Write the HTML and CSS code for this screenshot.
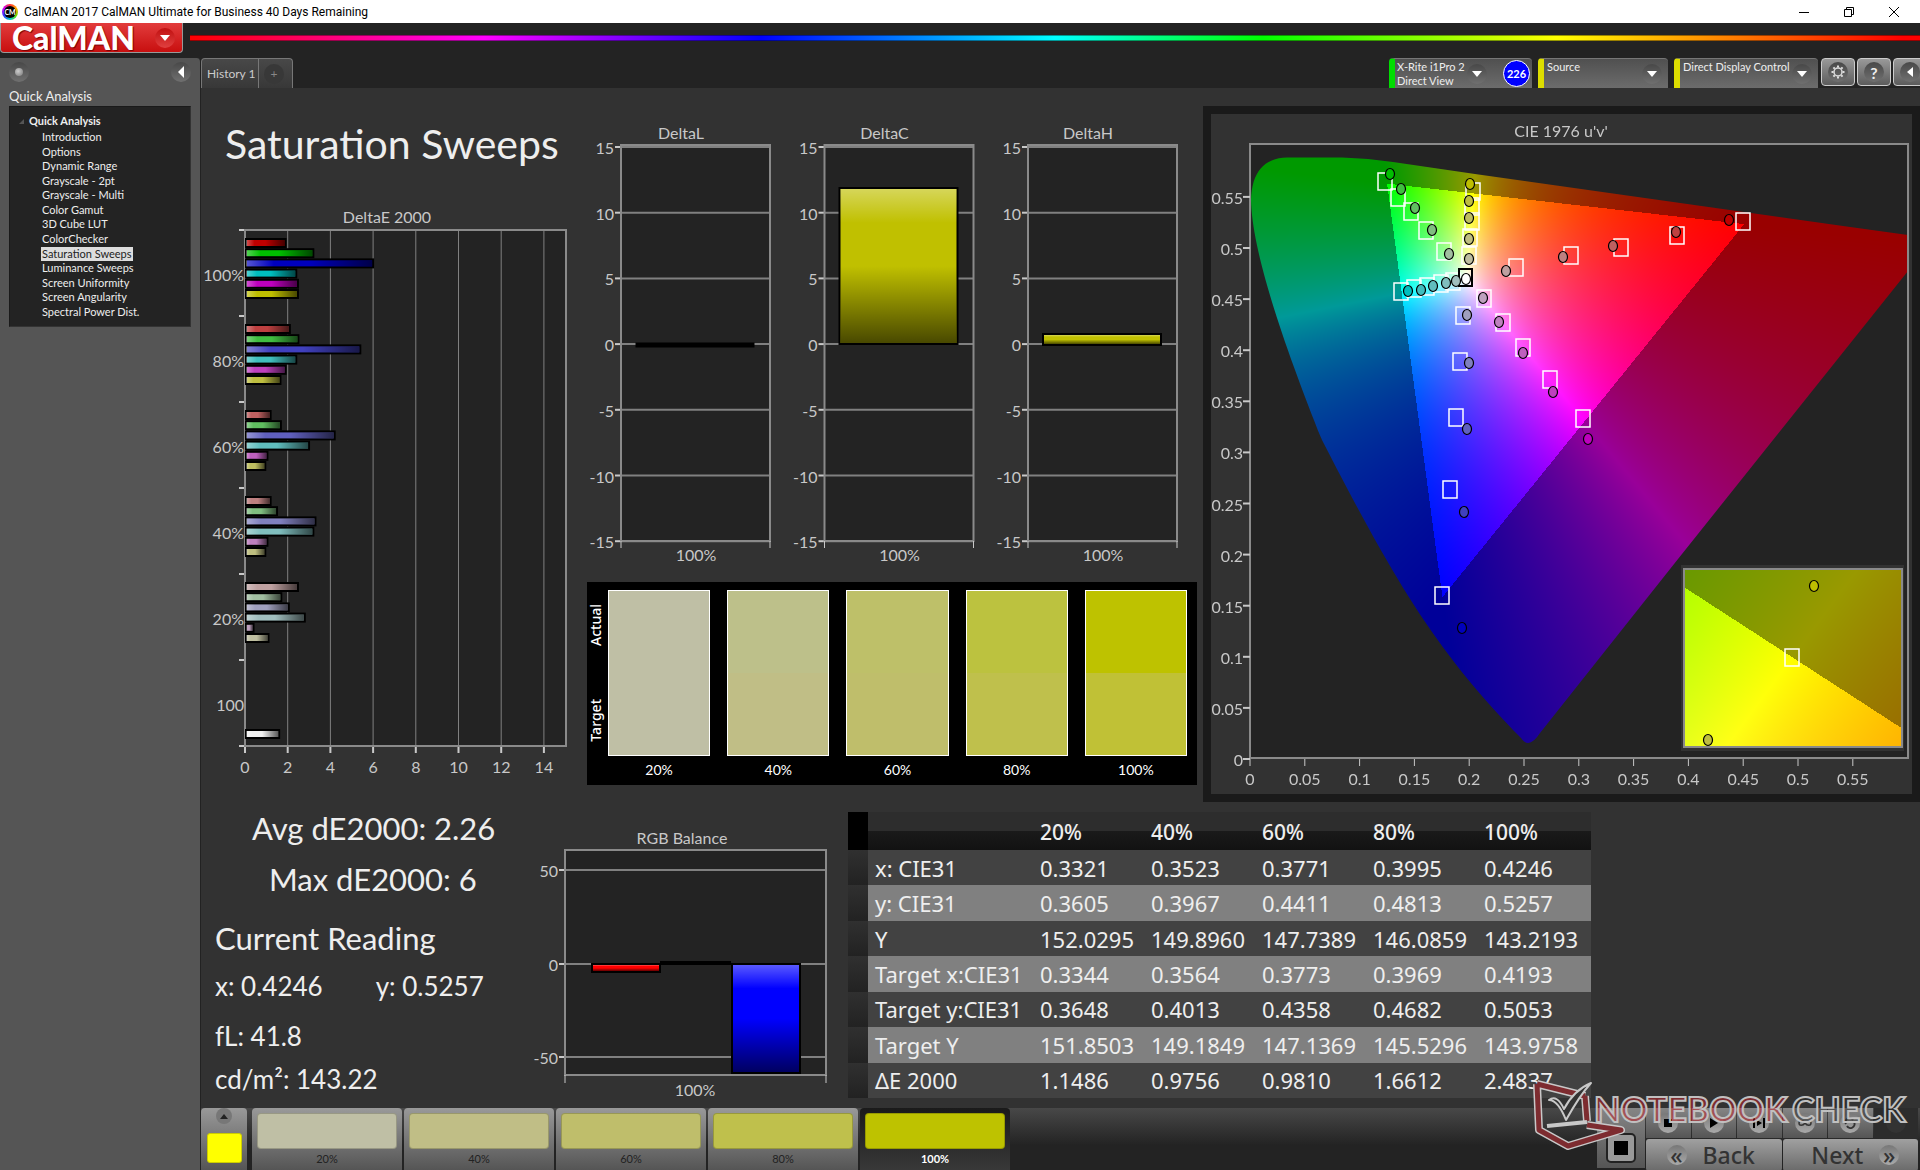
FILE: index.html
```html
<!DOCTYPE html>
<html lang="en">
<head>
<meta charset="utf-8">
<title>CalMAN 2017</title>
<link rel="stylesheet" href="styles.css">
</head>
<body>
<div class="titlebar">
  <span class="app-icon">CM</span>
  <span class="app-title">CalMAN 2017 CalMAN Ultimate for Business 40 Days Remaining</span>
  <div class="window-controls">
    <button aria-label="Minimize"><svg width="12" height="12"><path d="M1 6.500h10" /></svg></button>
    <button aria-label="Restore"><svg width="12" height="12"><path d="M1.500 3.500h7v7h-7zM3.500 3.500v-2h7v7h-2" /></svg></button>
    <button aria-label="Close"><svg width="12" height="12"><path d="M1 1l10 10M11 1L1 11" /></svg></button>
  </div>
</div>

<header class="brandbar">
  <button class="brand">CalMAN <span class="brand-arrow"><svg width="10" height="6"><path d="M0 0h10L5 6z" fill="#fff"/></svg></span></button>
  <div class="rainbow"></div>
</header>

<div class="shell">
  <aside class="sidebar">
    <div class="side-tools">
      <button class="knob" aria-label="Pin"><span class="dot"></span></button>
      <button class="knob" aria-label="Collapse"><svg width="6" height="12"><path d="M6 0v12L0 6z" fill="#fff"/></svg></button>
    </div>
    <h2>Quick Analysis</h2>
    <nav class="tree">
      <p><svg width="5" height="5"><path d="M5 0v5H0z" fill="#555"/></svg>Quick Analysis</p>
      <ul>
        <li><a href="#">Introduction</a></li>
        <li><a href="#">Options</a></li>
        <li><a href="#">Dynamic Range</a></li>
        <li><a href="#">Grayscale - 2pt</a></li>
        <li><a href="#">Grayscale - Multi</a></li>
        <li><a href="#">Color Gamut</a></li>
        <li><a href="#">3D Cube LUT</a></li>
        <li><a href="#">ColorChecker</a></li>
        <li><a href="#" class="current">Saturation Sweeps</a></li>
        <li><a href="#">Luminance Sweeps</a></li>
        <li><a href="#">Screen Uniformity</a></li>
        <li><a href="#">Screen Angularity</a></li>
        <li><a href="#">Spectral Power Dist.</a></li>
      </ul>
    </nav>
  </aside>

  <div class="content">
    <div class="toolbar">
      <div class="tabs">
        <button class="tab">History 1</button>
        <button class="tab add" aria-label="Add history"><span class="knob">+</span></button>
      </div>
      <div class="devices">
        <div class="device meter">
          <button class="device-name">X-Rite i1Pro 2<br>Direct View</button>
          <span class="knob arrow"><svg width="10" height="6"><path d="M0 0h10L5 6z" fill="#fff"/></svg></span>
          <span class="badge">226</span>
        </div>
        <div class="device source">
          <select aria-label="Source"><option>Source</option></select>
          <span class="knob arrow"><svg width="10" height="6"><path d="M0 0h10L5 6z" fill="#fff"/></svg></span>
        </div>
        <div class="device display">
          <select aria-label="Display control"><option>Direct Display Control</option></select>
          <span class="knob arrow"><svg width="10" height="6"><path d="M0 0h10L5 6z" fill="#fff"/></svg></span>
        </div>
        <div class="tools">
          <button aria-label="Settings"><span class="knob"><svg width="14" height="14" viewBox="-7 -7 14 14"><circle r="4" fill="none" stroke="#ddd" stroke-width="1.500"/><path d="M0-6.500V-4.500M0 4.500V6.500M-6.500 0H-4.500M4.500 0H6.500M-4.600-4.600L-3.200-3.200M4.600 4.600L3.200 3.200M-4.600 4.600L-3.200 3.200M4.600-4.600L3.200-3.200" stroke="#ddd" stroke-width="2"/></svg></span></button>
          <button aria-label="Help"><span class="knob">?</span></button>
          <button aria-label="Collapse toolbar"><span class="knob"><svg width="6" height="12"><path d="M6 1v10L0 6z" fill="#fff"/></svg></span></button>
        </div>
      </div>
    </div>

    <main class="workspace">
      <section class="row top">
        <div class="col-sweeps">
          <h1>Saturation Sweeps</h1>
          <svg id="delta-e" class="chart" viewBox="201 200 374 590" role="img" aria-label="DeltaE 2000"></svg>
        </div>
        <div class="col-deltas">
          <svg id="deltas" class="chart" viewBox="575 110 627 462" role="img" aria-label="DeltaL, DeltaC and DeltaH"></svg>
          <div class="swatches">
            <div class="swatch-axis"><span>Target</span><span>Actual</span></div>
            <figure><div class="pair s20"></div><figcaption>20%</figcaption></figure>
            <figure><div class="pair s40"></div><figcaption>40%</figcaption></figure>
            <figure><div class="pair s60"></div><figcaption>60%</figcaption></figure>
            <figure><div class="pair s80"></div><figcaption>80%</figcaption></figure>
            <figure><div class="pair s100"></div><figcaption>100%</figcaption></figure>
          </div>
        </div>
        <div class="cie">
          <canvas id="cie-field" width="701" height="680"></canvas>
          <svg id="cie-marks" class="chart" viewBox="1211 114 701 680" role="img" aria-label="CIE 1976 u'v'"></svg>
        </div>
      </section>

      <section class="row bottom">
        <div class="readings">
          <p class="avg">Avg dE2000: 2.26</p>
          <p class="max">Max dE2000: 6</p>
          <h2>Current Reading</h2>
          <div class="xy"><span>x: 0.4246</span><span>y: 0.5257</span></div>
          <p class="lum">fL: 41.8</p>
          <p class="nits">cd/m²: 143.22</p>
        </div>
        <svg id="rgb" class="chart" viewBox="540 804 300 300" role="img" aria-label="RGB Balance"></svg>
        <table>
          <thead><tr><td class="gutter"></td><th></th><th>20%</th><th>40%</th><th>60%</th><th>80%</th><th>100%</th></tr></thead>
          <tbody>
            <tr><td class="gutter"></td><th>x: CIE31</th><td>0.3321</td><td>0.3523</td><td>0.3771</td><td>0.3995</td><td>0.4246</td></tr>
            <tr><td class="gutter"></td><th>y: CIE31</th><td>0.3605</td><td>0.3967</td><td>0.4411</td><td>0.4813</td><td>0.5257</td></tr>
            <tr><td class="gutter"></td><th>Y</th><td>152.0295</td><td>149.8960</td><td>147.7389</td><td>146.0859</td><td>143.2193</td></tr>
            <tr><td class="gutter"></td><th>Target x:CIE31</th><td>0.3344</td><td>0.3564</td><td>0.3773</td><td>0.3969</td><td>0.4193</td></tr>
            <tr><td class="gutter"></td><th>Target y:CIE31</th><td>0.3648</td><td>0.4013</td><td>0.4358</td><td>0.4682</td><td>0.5053</td></tr>
            <tr><td class="gutter"></td><th>Target Y</th><td>151.8503</td><td>149.1849</td><td>147.1369</td><td>145.5296</td><td>143.9758</td></tr>
            <tr><td class="gutter"></td><th>ΔE 2000</th><td>1.1486</td><td>0.9756</td><td>0.9810</td><td>1.6612</td><td>2.4837</td></tr>
          </tbody>
        </table>
      </section>
    </main>

    <footer class="patterns">
      <button class="current-color" aria-label="Current pattern"><span class="up"><svg width="8" height="5"><path d="M4 0l4 5H0z" fill="#222"/></svg></span><span class="chip"></span></button>
      <button class="pattern p20"><span></span>20%</button>
      <button class="pattern p40"><span></span>40%</button>
      <button class="pattern p60"><span></span>60%</button>
      <button class="pattern p80"><span></span>80%</button>
      <button class="pattern p100 active"><span></span>100%</button>
      <div class="transport">
        <button class="stop" aria-label="Stop"><svg width="30" height="30" viewBox="0 0 30 30"><rect x="1" y="1" width="28" height="28" rx="4" fill="#999" stroke="#222" stroke-width="2"/><rect x="8" y="8" width="14" height="14" fill="#000"/></svg></button>
        <div class="modes">
          <button aria-label="Stop reading"><span class="knob"><svg width="8" height="8"><path d="M0 0h8v8H0z"/></svg></span></button>
          <button aria-label="Play"><span class="knob"><svg width="8" height="10"><path d="M0 0l8 5-8 5z"/></svg></span></button>
          <button aria-label="Step"><span class="knob"><svg width="12" height="10"><path d="M0 0h2v10H0zM4 2l5 3-5 3zM10 0h2v10h-2z"/></svg></span></button>
          <button aria-label="Loop"><span class="knob"><svg width="14" height="8"><path d="M7 4C5 1 1 1 1 4s4 3 6 0 6-3 6 0-4 3-6 0z" fill="none" stroke="#333" stroke-width="1.500"/></svg></span></button>
          <button aria-label="Refresh"><span class="knob"><svg width="12" height="12"><path d="M2 7a4 4 0 0 1 7-4M10 5a4 4 0 0 1-7 4" fill="none" stroke="#333" stroke-width="2"/></svg></span></button>
          <button class="off" aria-label="Record"><span class="knob"></span></button>
        </div>
        <div class="paging">
          <button><span class="knob">«</span>Back</button>
          <button>Next<span class="knob">»</span></button>
        </div>
      </div>
    </footer>
  </div>
</div>

<svg class="watermark" width="390" height="80" viewBox="0 0 390 80" role="img" aria-label="Notebookcheck">
  <g fill="none" stroke-linejoin="round">
    <path d="M7 4L55 16M7 4L9 50L38 66L91 50L57 45M55 16L57 41" stroke="#c8c8c8" stroke-width="8"/>
    <path d="M7 4L55 16M7 4L9 50L38 66L91 50L57 45M55 16L57 41" stroke="#7d2c30" stroke-width="5"/>
    <path d="M19 20Q27 14 34 29Q44 10 61 3Q50 15 36 40Q28 20 19 20Z" fill="#333" stroke="#c8c8c8" stroke-width="2"/>
    <path d="M17 46L57 42" stroke="#c8c8c8" stroke-width="4"/>
  </g>
  <text class="wm-red" x="64" y="42">NOTEBOOK</text>
  <text class="wm-dark" x="262" y="42">CHECK</text>
</svg>
<script src="charts.js"></script>
</body>
</html>
```
FILE: styles.css
```css
* { box-sizing: border-box; }
body {
  margin: 0;
  min-height: 100vh;
  display: flex;
  flex-direction: column;
  background: #232323;
  color: #eee;
  font-family: Lato, sans-serif;
  position: relative;
  overflow-x: hidden;
}
button, select { font: inherit; color: inherit; border: 0; padding: 0; background: none; }
h1, h2, p, ul, figure { margin: 0; padding: 0; font-weight: 400; }

.titlebar { display: flex; align-items: center; height: 23px; background: #fff; color: #000; padding-left: 2px; gap: 6px; font: 12px Roboto, sans-serif; }
.app-icon { width: 16px; height: 16px; border-radius: 50%; color: #fff; font: bold 7px/12px Lato, sans-serif; text-align: center; border: 2px solid transparent; background: linear-gradient(#000, #000) padding-box, conic-gradient(#f33, #fa0, #6d0, #0cc, #33f, #c0f, #f33) border-box; }
.window-controls { margin-left: auto; margin-right: 4px; display: flex; }
.window-controls button { width: 45px; height: 22px; display: grid; place-items: center; }
.window-controls path { fill: none; stroke: #000; }

.brandbar { display: flex; height: 35px; gap: 7px; }
.brand { display: flex; align-items: center; justify-content: space-between; width: 183px; height: 30px; padding: 0 7px 0 11px; color: #fff; font: 900 32px/28px Lato, sans-serif; background: linear-gradient(#e23c3c, #c80f0f); border: 1px solid #999; border-top: 0; border-radius: 0 0 4px 4px; text-shadow: 1px 1px 1px #700; }
.brand-arrow { width: 20px; height: 20px; border-radius: 50%; display: grid; place-items: center; background: linear-gradient(#c01010, #e04040); }
.rainbow { flex: 1; height: 6px; margin-top: 12px; background: linear-gradient(90deg, #f00, #f0f 17%, #00f 33%, #0ff 50%, #0f0 62%, #ff0 79%, #f00 99%); border-top: 1px solid #0006; border-bottom: 1px solid #0006; }

.shell { flex: 1; display: grid; grid-template-columns: 201px 1fr; }
.sidebar { background: #555; padding: 4px 9px 0; border-radius: 0 4px 0 0; border-right: 1px solid #222; }
.side-tools { display: flex; justify-content: space-between; }
.knob { width: 20px; height: 20px; border-radius: 50%; display: grid; place-items: center; background: linear-gradient(#484848, #707070); }
.dot { width: 8px; height: 8px; border-radius: 50%; background: radial-gradient(circle at 40% 40%, #ccc, #777); }
.sidebar h2 { font-size: 13px; line-height: 20px; margin-top: 4px; }
.tree { height: 221px; background: #232323; border: 1px solid #1a1a1a; border-right-color: #333; border-bottom-color: #333; padding: 6px 0 0 9px; font-size: 11px; line-height: 14px; }
.tree p { display: flex; align-items: center; gap: 5px; font-weight: 700; line-height: 16px; }
.tree ul { list-style: none; padding-left: 22px; height: 189px; margin-top: 1px; display: flex; flex-direction: column; justify-content: space-between; }
.tree a { display: block; width: max-content; padding: 0 1px; color: inherit; text-decoration: none; }
.tree .current { background: #ddd; color: #222; }

.content { display: flex; flex-direction: column; min-width: 0; }
.toolbar { display: flex; justify-content: space-between; height: 30px; overflow: hidden; }
.tabs { display: flex; }
.tab { height: 30px; padding: 0 5px; width: 58px; font-size: 12px; white-space: nowrap; color: #ccc; background: linear-gradient(#484848, #383838); border: 1px solid #777; border-bottom: 0; border-radius: 4px 0 0 0; }
.tab.add { width: 34px; border-left: 0; border-radius: 0 4px 0 0; color: #888; }
.tab.add .knob { background: #383838; }
.devices { display: flex; gap: 6px; margin-right: -7px; }
.device { display: flex; align-items: center; position: relative; background: linear-gradient(#505050, #6c6c6c); border-left: 6px solid #dddd00; border-top: 1px solid #777; border-radius: 4px 4px 0 0; font-size: 11px; line-height: 14px; padding-right: 6px; }
.device.meter { border-left-color: #00dd00; width: 143px; }
.device.source { width: 130px; }
.device.display { width: 144px; }
.device-name { flex: 1; text-align: left; padding-left: 2px; white-space: nowrap; }
.device select { appearance: none; width: 100%; height: 29px; padding: 0 0 14px 3px; }
.device .arrow { position: absolute; right: 6px; top: 5px; }
.device.meter .arrow { right: 45px; }
.badge { width: 27px; height: 27px; border-radius: 50%; border: 1px solid #fff; background: #00f; color: #fff; text-align: center; line-height: 25px; font-weight: 700; font-size: 11px; margin-right: -4px; }
.tools { display: flex; gap: 2px; margin-left: -3px; }
.tools button { width: 34px; height: 28px; display: grid; place-items: center; background: linear-gradient(#999, #5c5c5c); border: 1px solid #ccc; border-radius: 4px; font: bold 16px Lato, sans-serif; }

.workspace { flex: 1; background: #323232; }
.row { display: grid; }
.row.top { grid-template-columns: 374fr 627fr 718fr; padding-bottom: 2px; }
.row.bottom { grid-template-columns: 339fr 300fr 751fr 329fr; }
.chart { display: block; width: 100%; height: auto; font-size: 16px; overflow: visible; }
.chart text { fill: #c8c8c8; }
.col-sweeps h1 { margin: 26px 0 26px 24px; font-size: 41px; line-height: 60px; white-space: nowrap; }
.col-deltas { padding-top: 22px; }
.swatches { display: flex; margin: 10px 5px 0 12px; background: #000; padding: 8px 10px 5px 0; font-size: 14px; }
.swatches figure { flex: 1 1 0; }
.swatches figure + figure { flex-basis: 17px; padding-left: 17px; }
.swatch-axis { width: 21px; display: flex; flex-direction: column-reverse; justify-content: space-between; align-items: center; height: 166px; padding: 14px 4px 14px 0; font: 500 14px "Noto Sans", sans-serif; color: #fff; }
.swatch-axis span { writing-mode: vertical-rl; transform: rotate(180deg); }
.pair { height: 166px; border: 1px solid #fff; }
.swatches figcaption { text-align: center; line-height: 20px; margin-top: 4px; color: #fff; }
.s20 { background: #bfbfa5; }
.s40 { background: linear-gradient(#bdc08a 50%, #c0be86 50%); }
.s60 { background: linear-gradient(#bec069 50%, #bfbe6b 50%); }
.s80 { background: linear-gradient(#bcc23f 50%, #bfc04c 50%); }
.s100 { background: linear-gradient(#bec200 50%, #c0c136 50%); }
.cie { margin: 18px 0 0 1px; border: 8px solid #1a1a1a; display: grid; align-self: start; }
.cie canvas, .cie svg { grid-area: 1 / 1; width: 100%; display: block; }

.readings { padding: 0 0 0 14px; font-size: 26px; line-height: 40px; white-space: nowrap; }
.readings .avg, .readings .max, .readings h2 { font-size: 31px; }
.readings .avg { padding-left: 37px; margin-top: 4px; }
.readings .max { padding-left: 54px; margin-top: 11px; }
.readings h2 { margin-top: 19px; }
.readings .xy { display: flex; gap: 53px; margin-top: 8px; }
.readings .lum { margin-top: 10px; }
.readings .nits { margin-top: 3px; }

table { margin: 8px 0 0 8px; height: 286px; width: 743px; border-collapse: collapse; table-layout: fixed; font: 22px "Noto Sans", sans-serif; }
th, td { width: 111px; padding: 0; text-align: left; font-weight: 400; line-height: 30px; white-space: nowrap; }
th:nth-child(2) { width: 172px; padding-left: 7px; }
th:last-child { width: auto; }
td.gutter { width: 20px; background: linear-gradient(#303030, #222); }
tbody tr { background: #424242; }
tbody tr:nth-child(even) { background: #808080; }
thead tr { height: 38px; background: linear-gradient(#2d2d2d 50%, #1a1a1a 50%, #121212); }
thead th { font-size: 21px; font-weight: 500; padding-top: 2px; }
thead td.gutter { background: #000; }

.patterns { height: 62px; display: flex; gap: 2px; background: linear-gradient(#484848, #232323 60%); }
.patterns > button { border-radius: 4px 4px 0 0; background: linear-gradient(#999, #555); }
.current-color { width: 46px; margin-right: 3px; display: flex; flex-direction: column; align-items: center; gap: 9px; }
.up { width: 16px; height: 16px; border-radius: 50%; background: #777; display: grid; place-items: center; }
.chip { width: 35px; height: 30px; background: #ff0; border-radius: 3px; border: 1px solid #cc0; }
.pattern { width: 150px; padding: 5px 5px 0; font-size: 11px; line-height: 20px; color: #222; display: flex; flex-direction: column; text-align: center; }
.pattern span { height: 36px; border-radius: 4px; border: 1px solid #0003; }
.patterns > .active { background: linear-gradient(#1a1a1a, #383838); color: #fff; font-weight: 700; }
.p20 span { background: #bfbfa5; }
.p40 span { background: #c0be86; }
.p60 span { background: #bfbe6b; }
.p80 span { background: #bfc04c; }
.p100 span { background: #bec200; }
.transport { margin-left: auto; display: grid; grid-template: 30px 29px / 48px 272px; gap: 1px; padding-right: 2px; }
.transport button { background: linear-gradient(#858585, #555); color: #222; }
.stop { grid-row: 1 / 3; display: grid; place-items: end center; padding-bottom: 5px; }
.modes, .paging { display: grid; grid-template-columns: repeat(6, 1fr); gap: 1px; }
.modes button { display: grid; place-items: center; }
.modes .off { background: #2c2c2c; }
.modes .off .knob { background: #333; }
.paging { grid-template-columns: 1fr 1fr; }
.transport .paging button { background: linear-gradient(#a0a0a0, #6a6a6a); display: flex; align-items: center; justify-content: center; gap: 16px; padding-right: 6px; font: 500 23px "Noto Sans", sans-serif; color: #333; border-radius: 3px; }
.transport .paging button:last-child { padding: 0 0 0 10px; }
.transport .knob { background: linear-gradient(#777, #aaa); line-height: 18px; }

.watermark { position: absolute; right: 0; bottom: 10px; pointer-events: none; }
.watermark text { font: 700 34px Lato, sans-serif; stroke: #c0c0c0; stroke-width: 2px; }
.wm-red { fill: rgba(200, 35, 43, .5); }
.wm-dark { fill: rgba(40, 40, 40, .5); }
```
FILE: charts.js
```js
const NS = 'http://www.w3.org/2000/svg';
const AXIS = '#8a8a8a', GRID = '#808080', PLOT = '#232323', TICK = '#c8c8c8';

function pen(id) {
  const svg = document.getElementById(id);
  const add = (tag, attrs, text) => {
    const el = document.createElementNS(NS, tag);
    for (const k in attrs) el.setAttribute(k, attrs[k]);
    if (text !== undefined) el.textContent = text;
    svg.appendChild(el);
    return el;
  };
  return {
    svg, add,
    rect: (x, y, w, h, fill, stroke, sw) => add('rect', { x, y, width: w, height: h, fill, stroke: stroke || 'none', 'stroke-width': sw || 1 }),
    line: (x1, y1, x2, y2, c, w) => add('line', { x1, y1, x2, y2, stroke: c || GRID, 'stroke-width': w || 1 }),
    text: (x, y, s, anchor) => add('text', { x, y: y + 6, 'text-anchor': anchor || 'middle' }, s)
  };
}

function shade(p, id, vertical) {
  const d = document.createElementNS(NS, 'defs');
  d.innerHTML = `<linearGradient id="${id}" x1="0" y1="0" x2="${vertical ? 0 : 1}" y2="${vertical ? 1 : 0}">
    <stop offset="0" stop-color="#fff" stop-opacity=".35"/><stop offset=".22" stop-color="#fff" stop-opacity="0"/>
    <stop offset=".5" stop-color="#000" stop-opacity="0"/><stop offset="1" stop-color="#000" stop-opacity=".62"/></linearGradient>`;
  p.svg.appendChild(d);
}

const HUES = { r: [1, 0, 0], g: [0, 1, 0], b: [0, 0, 1], c: [0, 1, 1], m: [1, 0, 1], y: [1, 1, 0] };
const FLOOR = { 100: 0, 80: 64, 60: 96, 40: 128, 20: 160 };
const tint = (hue, level) => `rgb(${HUES[hue].map(v => v ? 190 : FLOOR[level]).join(',')})`;

(function deltaE() {
  const p = pen('delta-e');
  shade(p, 'sh-h', false);
  p.text(387, 217, 'DeltaE 2000');
  p.rect(245, 230, 321, 516, PLOT);
  const X = v => 245 + v * 21.35;
  for (let v = 0; v <= 14; v += 2) {
    p.line(X(v), 230, X(v), 746);
    p.line(X(v), 746, X(v), 753, TICK, 2);
    p.text(X(v), 767, v);
  }
  p.rect(245, 230, 321, 516, 'none', AXIS, 2);
  for (let i = 0; i <= 6; i++) p.line(239, 230 + i * 86, 244, 230 + i * 86, TICK, 2);
  const rows = {
    100: [1.9, 3.2, 6, 2.4, 2.48, 2.48], 80: [2.1, 2.5, 5.4, 2.4, 1.9, 1.66],
    60: [1.2, 1.68, 4.2, 3, 1.05, .95], 40: [1.2, 1.5, 3.3, 3.2, 1.05, .95], 20: [2.48, 1.7, 2.05, 2.8, .4, 1.1]
  };
  const bar = (v, y, c) => {
    p.rect(246, y - 4, X(v) - 246, 8, c, '#000', 2);
    p.rect(246, y - 3, X(v) - 247, 6, 'url(#sh-h)');
  };
  [100, 80, 60, 40, 20].forEach((level, g) => {
    rows[level].forEach((v, i) => bar(v, 243 + g * 86 + i * 10.2, tint('rgbcmy'[i], level)));
    p.text(244, 275 + g * 86, level + '%', 'end');
  });
  p.text(244, 705, '100', 'end');
  bar(1.6, 734, '#f0f0f0');
})();

(function deltas() {
  const p = pen('deltas');
  shade(p, 'sh-v', true);
  const bars = { L: [343, 4], C: [188, 156], H: [334, 11] };
  ['L', 'C', 'H'].forEach((n, i) => {
    const x = 621 + i * 203.5;
    p.text(x + 60, 133, 'Delta' + n);
    p.rect(x, 145, 149, 396, PLOT);
    for (let k = 0; k <= 6; k++) {
      const y = 147 + k * 65.7;
      p.line(x, y, x + 149, y, GRID, 2);
      p.line(x - 6, y, x, y, TICK, 2);
      p.text(x - 7, y + 1, 15 - k * 5, 'end');
    }
    p.rect(x, 145, 149, 396, 'none', AXIS, 2);
    p.line(x, 541, x, 548, TICK, 1);
    p.line(x + 149, 541, x + 149, 548, TICK, 1);
    p.text(x + 75, 555, '100%');
    const [y, h] = bars[n];
    p.rect(x + 15, y, 118, h, n === 'L' ? '#000' : '#c0c000', '#000', n === 'L' ? 1 : 2);
    if (n !== 'L') p.rect(x + 16, y + 1, 116, h - 2, 'url(#sh-v)');
  });
})();

(function rgb() {
  const p = pen('rgb');
  shade(p, 'sh-rgb', true);
  p.text(682, 838, 'RGB Balance');
  p.rect(565, 850, 261, 225, PLOT);
  [[50, 870], [0, 964], [-50, 1057]].forEach(([v, y]) => {
    p.line(565, y, 826, y, GRID, 2);
    p.line(559, y, 565, y, TICK, 2);
    p.text(558, y + 1, v, 'end');
  });
  p.rect(565, 850, 261, 225, 'none', AXIS, 2);
  p.line(565, 1075, 565, 1083, TICK);
  p.line(826, 1075, 826, 1083, TICK);
  p.text(695, 1090, '100%');
  p.rect(592, 964, 68, 8, '#f00', '#000', 2);
  p.rect(660, 961, 71, 4, '#000');
  p.rect(732, 964, 68, 109, '#00f', '#000', 2);
  p.rect(593, 965, 66, 6, 'url(#sh-rgb)');
  p.rect(733, 965, 66, 107, 'url(#sh-rgb)');
})();

// Display colour of an xy chromaticity; dimmed outside Rec. 709
function chroma(x, y) {
  const X = x / y, Z = (1 - x - y) / y;
  const c = [3.2406 * X - 1.5372 - .4986 * Z, -.9689 * X + 1.8758 + .0415 * Z, .0557 * X - .204 + 1.057 * Z];
  const inside = Math.min(...c) >= 0;
  const top = Math.max(...c);
  return c.map(v => 255 * Math.max(0, v) / top * (inside ? 1 : .6));
}

(function field() {
  const cv = document.getElementById('cie-field'), g = cv.getContext('2d');
  const OX = 1211, OY = 114, W = cv.width, H = cv.height;
  const paint = (x0, y0, w, h, toXY) => {
    const img = g.createImageData(w, h);
    for (let j = 0; j < h; j++) for (let i = 0; i < w; i++) {
      const [x, y] = toXY(x0 + i, y0 + j);
      const c = chroma(x, y), o = (j * w + i) * 4;
      img.data[o] = c[0]; img.data[o + 1] = c[1]; img.data[o + 2] = c[2]; img.data[o + 3] = 255;
    }
    g.putImageData(img, x0 - OX, y0 - OY);
  };
  paint(OX, OY, W, H, (px, py) => {
    const u = (px - 1249.6) / 1096, v = (758 - py) / 1022, d = 6 * u - 16 * v + 12;
    return [9 * u / d, 4 * v / d];
  });
  // Spectral locus outline
  g.globalCompositeOperation = 'destination-in';
  g.translate(-OX, -OY);
  g.beginPath();
  g.moveTo(1251, 200);
  g.bezierCurveTo(1252, 172, 1264, 158, 1287, 157.5);
  [[1342, 157.5], [1368, 159], [1393, 162], [1475, 174], [1567, 187], [1659, 200], [1751, 213], [1843, 226], [1908, 235],
   [1908, 271], [1773, 440], [1678, 559], [1540, 733]].forEach(q => g.lineTo(...q));
  g.quadraticCurveTo(1529, 750, 1521, 738);
  g.bezierCurveTo(1440, 655, 1399, 590, 1322, 440);
  g.bezierCurveTo(1282, 340, 1252, 250, 1251, 200);
  g.fill();
  g.globalCompositeOperation = 'destination-over';
  g.fillStyle = PLOT;
  g.fillRect(1250, 144, 658, 614);
  // Magnified view around the yellow target, on xy axes
  g.globalCompositeOperation = 'source-over';
  g.fillStyle = '#323232';
  g.fillRect(1681, 565, 223, 186);
  paint(1684, 568, 218, 180, (px, py) => [.4193 + (px - 1791.8) / 4245, .5053 - (py - 656.7) / 3465]);
})();

(function marks() {
  const p = pen('cie-marks');
  p.text(1561, 131, "CIE 1976 u'v'");
  p.rect(1250, 144, 658, 614, 'none', AXIS, 2);
  for (let k = 0; k <= 11; k++) {
    const s = String(+(k * .05).toFixed(2)), x = 1250 + k * 54.8, y = 759 - k * 51.1;
    p.line(x, 759, x, 766, TICK, 1);
    p.text(x, 779, s);
    p.line(1243, y, 1250, y, TICK, 2);
    p.text(1243, y + 1, s, 'end');
  }
  const targets = [[1385, 181], [1398, 197], [1411, 211], [1426, 230], [1444, 251], [1473, 191], [1472, 206], [1472, 221], [1470, 237], [1469, 255],
    [1516, 267], [1571, 255], [1621, 247], [1677, 235], [1743, 221], [1401, 291], [1414, 288], [1427, 286], [1441, 283], [1453, 281],
    [1484, 298], [1503, 322], [1523, 347], [1550, 379], [1583, 418], [1463, 315], [1460, 361], [1456, 417], [1450, 489], [1442, 595], [1792, 657]];
  targets.forEach(([x, y]) => p.rect(x - 7, y - 8, 14, 17, 'none', '#fff', 1.5));
  p.rect(1459, 269, 13, 17, 'none', '#000', 2);
  const measured = {
    g: [[1390, 174], [1401, 189], [1415, 208], [1432, 230], [1449, 254]],
    y: [[1470, 184], [1469, 201], [1469, 218], [1469, 239], [1469, 259]],
    r: [[1729, 220], [1676, 232], [1613, 246], [1563, 257], [1506, 271]],
    c: [[1408, 291], [1421, 290], [1433, 286], [1446, 283], [1456, 281]],
    m: [[1588, 439], [1553, 392], [1523, 353], [1499, 322], [1483, 298]],
    b: [[1462, 628], [1464, 512], [1467, 429], [1469, 363], [1467, 315]]
  };
  const dot = (x, y, fill) => p.add('ellipse', { cx: x, cy: y, rx: 4.5, ry: 5.5, fill, stroke: '#000', 'stroke-width': 1.2 });
  for (const h in measured) measured[h].forEach(([x, y], i) => dot(x, y, tint(h, 100 - i * 20)));
  dot(1466, 279, '#fff');
  p.rect(1684, 569, 218, 178, 'none', AXIS, 2);
  dot(1814, 586, tint('y', 100));
  dot(1708, 740, tint('y', 80));
})();
```
